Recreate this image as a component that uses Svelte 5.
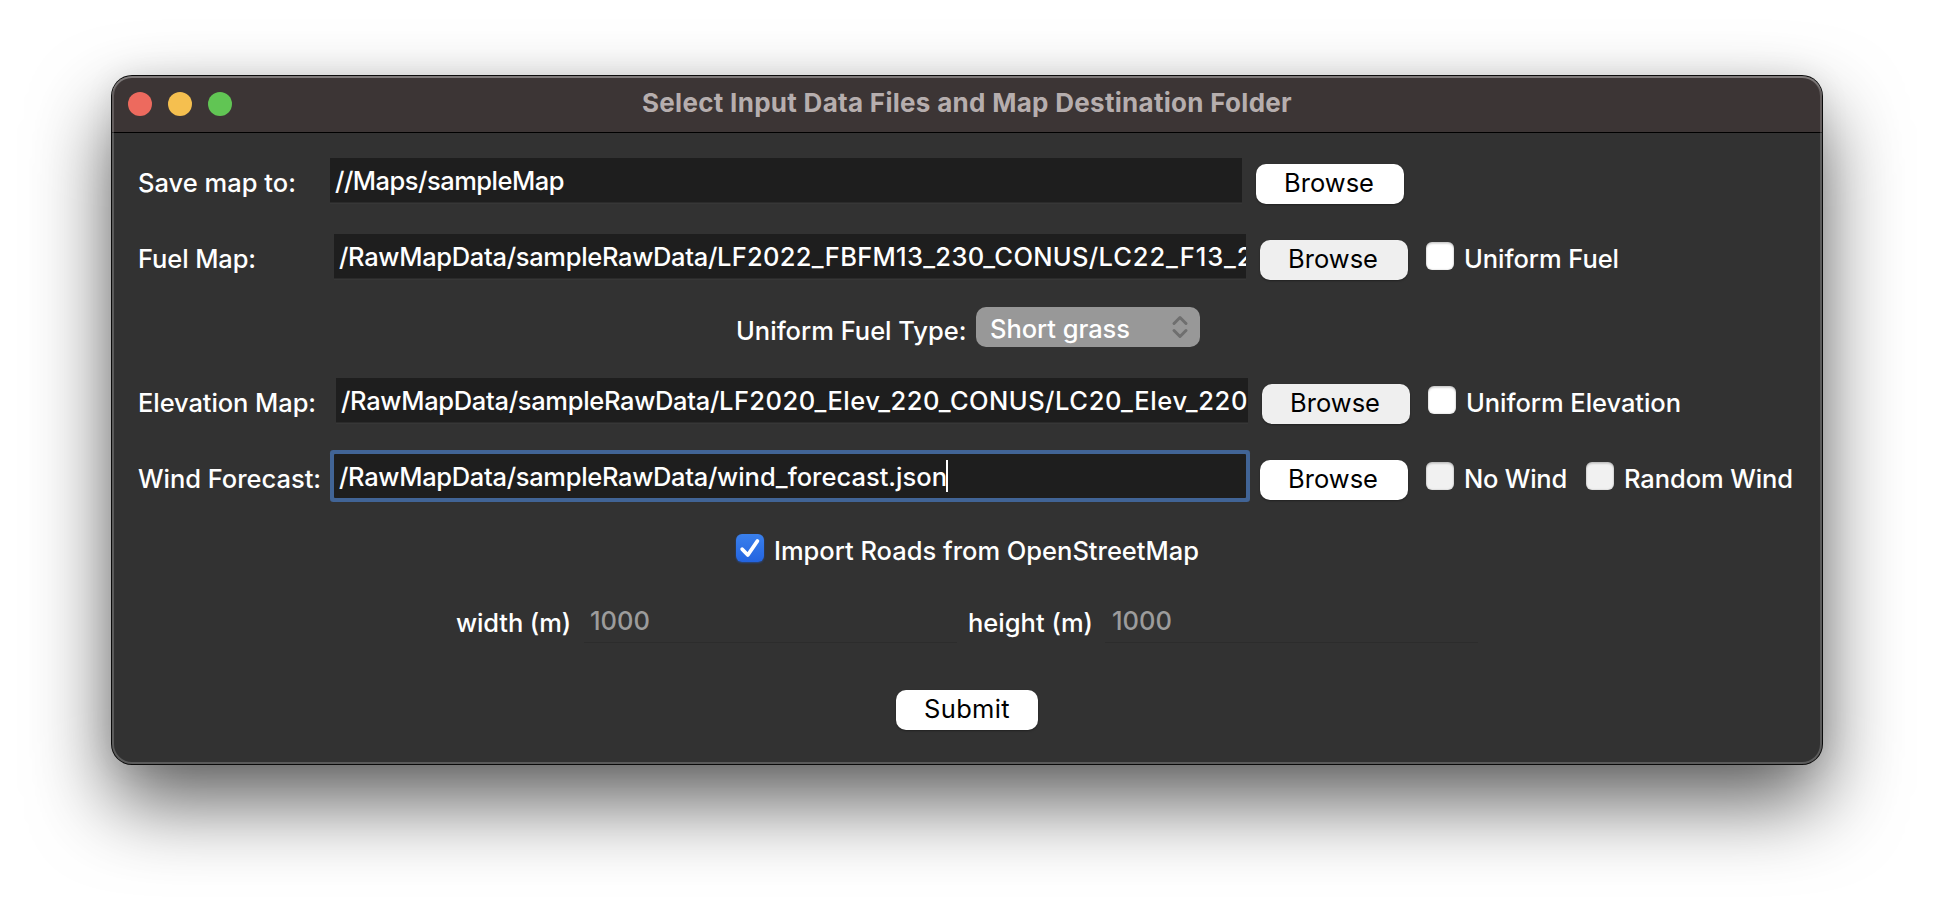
<script>
  function fit(node, width) {
    const count = node.textContent.length;
    const natural = node.getBoundingClientRect().width;
    node.style.letterSpacing = (width - natural) / count + 'px';
  }

  const lights = ['#ed6a5e', '#f5bf4f', '#61c554'];
  const root = { text: '/RawMapData/sampleRawData/', w: 378 };
  const rows = [
    {
      label: 'Save map to:', lw: 158, indent: 192,
      value: [{ text: '//Maps/sampleMap', w: 229 }],
      checks: []
    },
    {
      label: 'Fuel Map:', lw: 118, indent: 196, dim: true,
      value: [root, { text: 'LF2022_FBFM13_230_CONUS/', w: 381.5 }, { text: 'LC22_F13_2', w: 155 }],
      checks: [{ text: 'Uniform Fuel', w: 155 }]
    },
    {
      label: 'Elevation Map:', lw: 178, indent: 198, dim: true,
      value: [root, { text: 'LF2020_Elev_220_CONUS/', w: 336 }, { text: 'LC20_Elev_220', w: 193 }],
      checks: [{ text: 'Uniform Elevation', w: 215 }]
    },
    {
      label: 'Wind Forecast:', lw: 183, indent: 196, focus: true,
      value: [root, { text: 'wind_forecast.json', w: 230 }],
      checks: [{ text: 'No Wind', w: 103, dim: true }, { text: 'Random Wind', w: 169, dim: true }]
    }
  ];
</script>

{#snippet fileRow(r)}
  <div class="row">
    <div class="label" style:width="{r.indent}px"><span use:fit={r.lw}>{r.label}</span></div>
    <div class="field" class:focus={r.focus}>
      {#each r.value as part}<span use:fit={part.w}>{part.text}</span>{/each}{#if r.focus}<i class="caret"></i>{/if}
    </div>
    <button class:dim={r.dim}><span use:fit={90}>Browse</span></button>
    {#each r.checks as c}
      <div class="check">
        <i class="box" class:dim={c.dim}></i>
        <span use:fit={c.w}>{c.text}</span>
      </div>
    {/each}
  </div>
{/snippet}

<div class="desktop">
  <div class="window">
    <header>
      <div class="lights">
        {#each lights as color}<i style:background={color}></i>{/each}
      </div>
      <h1><span use:fit={650}>Select Input Data Files and Map Destination Folder</span></h1>
    </header>
    <main>
      {@render fileRow(rows[0])}
      {@render fileRow(rows[1])}
      <div class="row type">
        <div class="label"><span use:fit={230.5}>Uniform Fuel Type:</span></div>
        <div class="select">
          <span use:fit={140}>Short grass</span>
          <svg width="18" height="26" viewBox="0 0 18 26" fill="none" stroke="#6f6f6f" stroke-width="3" stroke-linecap="round" stroke-linejoin="round">
            <path d="M3 9.5 9 3.5l6 6M3 16.5l6 6 6-6" />
          </svg>
        </div>
      </div>
      {@render fileRow(rows[2])}
      {@render fileRow(rows[3])}
      <div class="row roads">
        <div class="check">
          <i class="box on">
            <svg width="28" height="28" viewBox="0 0 28 28" fill="none" stroke="#fff" stroke-width="3.8" stroke-linecap="round" stroke-linejoin="round">
              <path d="M6.2 15.2 11.8 21 21.4 7" />
            </svg>
          </i>
          <span use:fit={425}>Import Roads from OpenStreetMap</span>
        </div>
      </div>
      <div class="row size">
        <div class="label"><span use:fit={115}>width (m)</span></div>
        <div class="ghost first"><span use:fit={60}>1000</span></div>
        <div class="label"><span use:fit={125}>height (m)</span></div>
        <div class="ghost second"><span use:fit={60}>1000</span></div>
      </div>
      <div class="row submit">
        <button><span use:fit={86}>Submit</span></button>
      </div>
    </main>
  </div>
</div>

<style>
  :global(body) { background: #fff; }
  .desktop {
    box-sizing: border-box;
    width: 1934px;
    height: 912px;
    padding: 76px 112px 148px;
    overflow: hidden;
    background: #fff;
    color: #fff;
    font: 450 25.5px Inter, 'Liberation Sans', sans-serif;
    white-space: nowrap;
  }
  .window {
    position: relative;
    box-sizing: border-box;
    height: 688px;
    border-radius: 20px;
    background: #323232;
    box-shadow: 0 0 0 1px #0b0b0b, 0 38px 80px rgba(0, 0, 0, 0.63), 0 0 30px rgba(0, 0, 0, 0.08);
  }
  .window::after {
    content: '';
    position: absolute;
    inset: 0;
    border-radius: 20px;
    box-shadow: inset 0 0 0 2px rgba(255, 255, 255, 0.2), inset 0 2px 0 rgba(255, 255, 255, 0.18);
    pointer-events: none;
  }
  header {
    box-sizing: border-box;
    display: grid;
    grid-template-columns: 1fr auto 1fr;
    height: 57px;
    padding: 0 16px;
    border-radius: 20px 20px 0 0;
    border-bottom: 1px solid #000;
    background: #3c3535;
  }
  .lights { display: flex; gap: 16px; padding-top: 16px; }
  .lights i { width: 24px; height: 24px; border-radius: 50%; }
  h1 { margin: 0; color: #b6aeae; font-size: 26px; font-weight: 700; line-height: 54px; }
  main {
    display: grid;
    grid-template-rows: 76px 72px 72px 76px 72px 72px 86px 46px;
    padding: 25px 26px 0;
  }
  .row { display: flex; align-items: flex-start; }
  .label, .check { line-height: 38px; margin-top: 6px; }
  .label { flex: none; }
  .field {
    display: flex;
    flex: none;
    width: 912px;
    height: 44px;
    box-sizing: border-box;
    padding-left: 5px;
    overflow: hidden;
    background: #1e1e1e;
    box-shadow: 0 1px 0 #2b2b2b, 0 2px 0 #373737;
    line-height: 45px;
  }
  .field span { flex: none; }
  .field.focus { box-shadow: 0 0 0 4px #416496; border-radius: 1px; }
  .caret { flex: none; width: 2px; height: 32px; margin: 6px 0 0 -1px; background: #fff; }
  button {
    box-sizing: border-box;
    flex: none;
    width: 148px;
    height: 40px;
    margin: 6px 0 0 14px;
    padding: 0 2px 0 0;
    border: 0;
    border-radius: 10px;
    background: #fff;
    box-shadow: 0 1px 2px rgba(0, 0, 0, 0.35);
    color: #000;
    font: inherit;
    font-weight: 400;
    line-height: 38px;
  }
  button span { display: block; width: max-content; margin: 0 auto; height: 40px; }
  button.dim { background: #efefef; }
  .check { display: flex; margin-left: 18px; }
  .check + .check { margin-left: 19px; }
  .box {
    width: 28px;
    height: 28px;
    margin: 2px 10px 0 0;
    border-radius: 6px;
    background: #fff;
    box-shadow: inset 0 2px 2px rgba(0, 0, 0, 0.14), inset 0 0 2px rgba(0, 0, 0, 0.25);
  }
  .box.dim { background: #f1f1f1; }
  .box.on { background: linear-gradient(#3a80ec, #2364e0); box-shadow: 0 1px 2px rgba(30, 100, 230, 0.5); }
  .box svg { display: block; }
  .type .label { width: 240px; }
  .type { padding-left: 598px; }
  .select {
    display: flex;
    justify-content: space-between;
    box-sizing: border-box;
    width: 224px;
    height: 40px;
    margin-top: 1px;
    padding: 0 11px 0 14px;
    border-radius: 10px;
    background: #989898;
    line-height: 43px;
  }
  .select svg { margin-top: 7px; }
  .roads { padding-left: 598px; }
  .roads .check { margin-left: 0; }
  .size { padding-left: 318px; }
  .ghost {
    box-sizing: border-box;
    flex: none;
    width: 373px;
    height: 45px;
    border-bottom: 1px solid #2c2c2c;
    color: #9c9c9c;
    line-height: 45px;
  }
  .ghost.first { margin: 0 11px 0 13px; padding-left: 6px; }
  .ghost.second { margin-left: 12px; padding-left: 7px; }
  .submit { justify-content: center; }
  .submit button { width: 142px; margin-left: 0; padding: 0; }
</style>
